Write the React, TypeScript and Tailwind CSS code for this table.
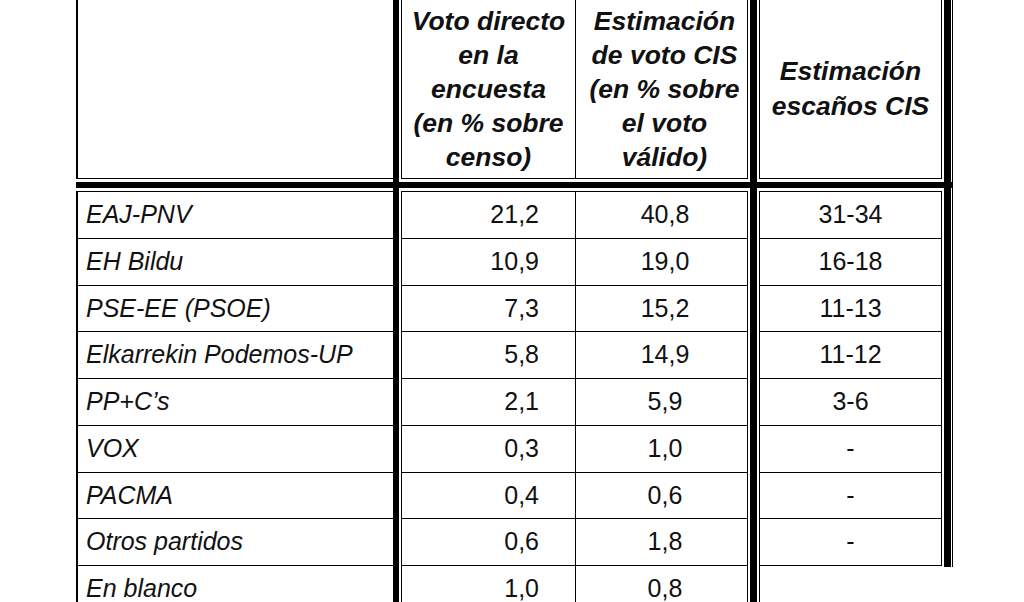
import React from 'react';

type Row = { party: string; direct: string; vote: string; seats: string | null };

const rows: Row[] = [
  { party: 'EAJ-PNV', direct: '21,2', vote: '40,8', seats: '31-34' },
  { party: 'EH Bildu', direct: '10,9', vote: '19,0', seats: '16-18' },
  { party: 'PSE-EE (PSOE)', direct: '7,3', vote: '15,2', seats: '11-13' },
  { party: 'Elkarrekin Podemos-UP', direct: '5,8', vote: '14,9', seats: '11-12' },
  { party: 'PP+C’s', direct: '2,1', vote: '5,9', seats: '3-6' },
  { party: 'VOX', direct: '0,3', vote: '1,0', seats: '-' },
  { party: 'PACMA', direct: '0,4', vote: '0,6', seats: '-' },
  { party: 'Otros partidos', direct: '0,6', vote: '1,8', seats: '-' },
  { party: 'En blanco', direct: '1,0', vote: '0,8', seats: null },
];

// thick black bar segments
const Thick = ({ w }: { w: string }) => <div className={`${w} shrink-0 bg-black`} />;
const Gap = ({ w }: { w: string }) => <div className={`${w} shrink-0`} />;

const HeaderRow = () => (
  <div className="flex h-[179px]">
    <div className="w-[2px] shrink-0 bg-black" />
    <div className="w-[315px] shrink-0 border-b border-black" />
    <Thick w="w-[6px]" />
    <Gap w="w-[2px]" />
    <div className="w-[174px] shrink-0 border-b border-l border-black flex items-center justify-center text-center leading-[34px]">
      <div>
        Voto directo<br />en la<br />encuesta<br />(en % sobre<br />censo)
      </div>
    </div>
    <div className="w-[173px] shrink-0 border-b border-l border-r border-black flex items-center justify-center pl-[6px] text-center leading-[34px]">
      <div>
        Estimación<br />de voto CIS<br />(en % sobre<br />el voto<br />válido)
      </div>
    </div>
    <Gap w="w-[2px]" />
    <Thick w="w-[7px]" />
    <Gap w="w-[2px]" />
    <div className="w-[183px] shrink-0 border-b border-l border-r border-black flex items-center justify-center text-center leading-[35px]">
      <div>
        Estimación<br />escaños CIS
      </div>
    </div>
    <Gap w="w-[2px]" />
    <Thick w="w-[7px]" />
    <Gap w="w-[1px]" />
    <Thick w="w-[1px]" />
  </div>
);

const GapRow = () => (
  <div className="flex h-[3px]">
    <Gap w="w-[2px]" />
    <Gap w="w-[315px]" />
    <Thick w="w-[6px]" />
    <Gap w="w-[2px]" />
    <Gap w="w-[174px]" />
    <Gap w="w-[173px]" />
    <Gap w="w-[2px]" />
    <Thick w="w-[7px]" />
    <Gap w="w-[2px]" />
    <Gap w="w-[183px]" />
    <Gap w="w-[2px]" />
    <Thick w="w-[7px]" />
    <Gap w="w-[1px]" />
    <Thick w="w-[1px]" />
  </div>
);

const BodyRow = ({ row }: { row: Row }) => {
  const last = row.seats === null;
  return (
    <div className="flex h-[46.75px] font-normal not-italic">
      <div className="w-[2px] shrink-0 bg-black" />
      <div className="w-[315px] shrink-0 border-t border-black flex items-center pl-[8px] italic">
        {row.party}
      </div>
      <Thick w="w-[6px]" />
      <Gap w="w-[2px]" />
      <div className="w-[174px] shrink-0 border-t border-l border-black flex items-center justify-end pr-[36px]">
        {row.direct}
      </div>
      <div className="w-[173px] shrink-0 border-t border-l border-r border-black flex items-center justify-center pl-[7px]">
        {row.vote}
      </div>
      <Gap w="w-[2px]" />
      <Thick w="w-[7px]" />
      <Gap w="w-[2px]" />
      {last ? (
        <>
          <div className="w-[183px] shrink-0 border-t border-l border-black" />
          <Gap w="w-[2px]" />
          <div className="w-[7px] shrink-0">
            <div className="h-[2px] bg-black" />
          </div>
          <Gap w="w-[1px]" />
          <div className="w-[1px] shrink-0">
            <div className="h-[2px] bg-black" />
          </div>
        </>
      ) : (
        <>
          <div className="w-[183px] shrink-0 border-t border-l border-r border-black flex items-center justify-center">
            {row.seats}
          </div>
          <Gap w="w-[2px]" />
          <Thick w="w-[7px]" />
          <Gap w="w-[1px]" />
          <Thick w="w-[1px]" />
        </>
      )}
    </div>
  );
};

export default function App() {
  return (
    <div className="h-[602px] w-[1024px] overflow-hidden bg-white font-['Liberation_Sans',Arial,sans-serif] text-[#111]">
      <div className="ml-[76px] flex w-[877px] flex-col text-[26.5px] font-bold italic">
        <HeaderRow />
        <GapRow />
        <div className="h-[6px] bg-black" />
        <GapRow />
        <div className="text-[25px]">
          {rows.map((r) => (
            <BodyRow key={r.party} row={r} />
          ))}
        </div>
      </div>
    </div>
  );
}
